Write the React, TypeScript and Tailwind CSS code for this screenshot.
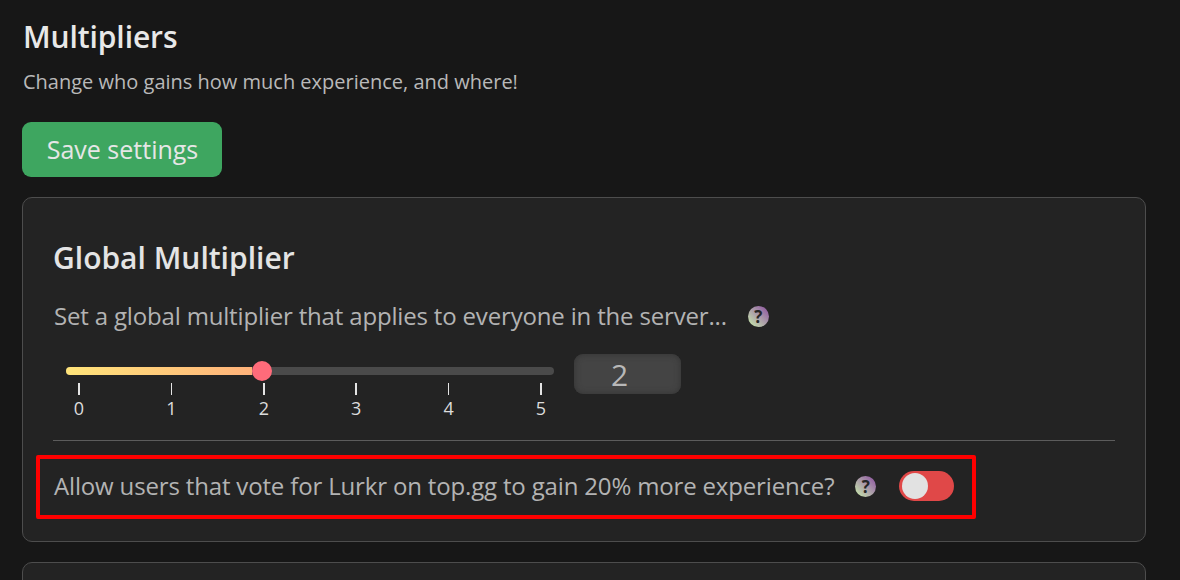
const Help = () => (
  <span className="flex h-[21px] w-[21px] shrink-0 items-center justify-center rounded-full bg-gradient-to-tr from-[#c9f0a8] to-[#8a4a9e] text-[17px] leading-none font-bold text-[#262626]">
    ?
  </span>
);

const ticks = [0, 1, 2, 3, 4, 5];

const App = () => {
  return (
    <div className="h-[580px] overflow-hidden bg-[#171717] pl-[22px] pr-[34px] pt-[17px] font-['Open_Sans',sans-serif]">
      <h1 className="pl-px text-[30px] leading-[40px] font-semibold tracking-[-0.1px] text-[#e8e8e8]">Multipliers</h1>
      <p className="mt-[10px] pl-px text-[20px] leading-[30px] text-[#b9b9b9]">
        Change who gains how much experience, and where!
      </p>
      <button className="mt-[25px] block h-[55px] w-[200px] rounded-[9px] bg-[#3ea660] pl-px text-[25px] text-[#e6e6e6]">
        Save settings
      </button>

      <section className="mt-[20px] h-[345px] rounded-[10px] border border-[#4d4d4d] bg-[#232323] pl-[30px] pr-[30px] pt-[37px]">
        <h2 className="text-[30px] leading-[46px] font-semibold text-[#e4e4e4]">Global Multiplier</h2>
        <div className="mt-[17px] flex items-center pl-px">
          <p className="text-[24px] leading-[36px] tracking-[-0.17px] text-[#b3b3b3]">
            Set a global multiplier that applies to everyone in the server...
          </p>
          <span className="ml-[21px]">
            <Help />
          </span>
        </div>

        <div className="mt-[20px] flex items-start">
          <div className="ml-[13px] w-[488px]">
            <div className="mt-[13px] flex h-[8px] items-center rounded-full bg-[#4a4a4a]">
              <div className="h-full w-[186px] rounded-l-full bg-gradient-to-r from-[#ffe47a] to-[#ffb27a]" />
              <div className="h-[20px] w-[20px] shrink-0 rounded-full bg-[#ff6b7a]" />
            </div>
            <div className="mt-[8px] flex w-[488px] justify-between pl-[3px] pr-[3px]">
              {ticks.map((t) => (
                <div key={t} className="flex w-[20px] flex-col items-center">
                  <div className="h-[12px] w-[1.5px] bg-[#e4e4e4]" />
                  <span className="text-[18px] leading-[26px] text-[#dcdcdc]">{t}</span>
                </div>
              ))}
            </div>
          </div>
          <div className="ml-[20px] flex h-[40px] w-[107px] items-center rounded-[9px] bg-[#444444] pl-[37px] text-[30px] text-[#b8b8b8] shadow-[inset_0_0_6px_#333333]">
            2
          </div>
        </div>

        <div className="mt-[19px] border-t border-[#5c5c5c]" />

        <div className="relative mt-[14px] flex h-[64px] items-center pb-[2px] pl-px">
          <div className="absolute -left-[17px] top-0 h-[64px] w-[940px] rounded-[2px] border-[4px] border-[#ff0000]" />
          <p className="text-[24px] leading-[36px] tracking-[-0.16px] text-[#b3b3b3]">
            Allow users that vote for Lurkr on top.gg to gain 20% more experience?
          </p>
          <span className="ml-[21px]">
            <Help />
          </span>
          <div className="ml-[23px] flex h-[30px] w-[55px] items-center rounded-full bg-[#e04848] pl-[3px]">
            <div className="h-[26px] w-[26px] rounded-full bg-[#e2e2e2]" />
          </div>
        </div>
      </section>

      <section className="mt-[20px] h-[60px] rounded-[10px] border border-[#4d4d4d] bg-[#232323]" />
    </div>
  );
};

export default App;
